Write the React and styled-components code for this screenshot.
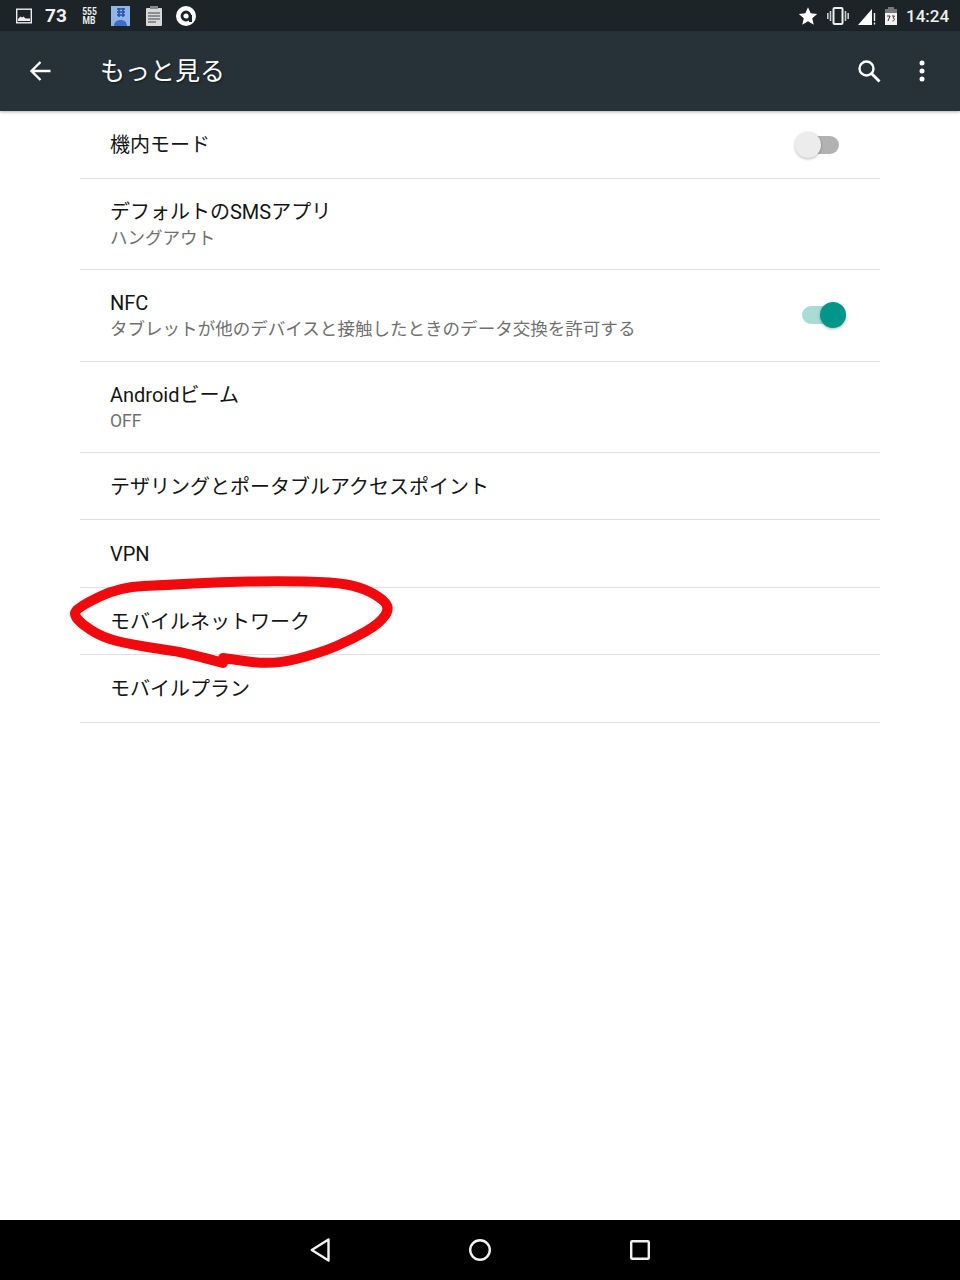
import React from "react";
import styled, { createGlobalStyle } from "styled-components";

const Global = createGlobalStyle`
  html, body { margin: 0; padding: 0; background: #fff; }
  * { box-sizing: border-box; }
`;
const Page = styled.div`
  position: relative; width: 960px; height: 1280px; display: flex; flex-direction: column;
  background: #fff; overflow: hidden;
  font-family: Roboto, "Noto Sans CJK JP", sans-serif;
`;
const StatusBar = styled.div`
  height: 31px; background: #1c2428; display: flex; align-items: center; justify-content: space-between;
  padding: 0 10px 0 16px; color: #fff; flex: none;
`;
const StatusGroup = styled.div`display: flex; align-items: center; gap: ${p => p.$gap || 0}px;`;
const Level = styled.span`font-size: 19px; font-weight: 700; color: #f2f2f2; margin: 0 15px 0 13px; width: 21px;`;
const Mem = styled.span`
  font-size: 10px; line-height: 9px; font-weight: 700; width: 16px; text-align: center; color: #eee; margin-right: 14px; transform: scaleX(.85);
`;
const Clock = styled.span`font-size: 17px; font-weight: 500; color: #f0f0f0; width: 44px; white-space: nowrap;`;
const Toolbar = styled.header`
  height: 80px; background: #263238; display: flex; align-items: center; flex: none;
  padding: 0 35px 0 28px; color: #fff; position: relative; z-index: 1;
  box-shadow: 0 1px 3px rgba(0,0,0,.3);
`;
const Title = styled.h1`
  margin: -4px 0 0 48px; font-size: 25px; font-weight: 400; flex: 1; color: #fff; white-space: nowrap;
  font-family: "Noto Sans CJK JP", sans-serif; text-shadow: 1px 1px 2px rgba(0,0,0,.5);
`;
const ToolIcons = styled.div`display: flex; align-items: center; gap: 37px;`;
const List = styled.main`flex: 1; padding: 0 80px; display: flex; flex-direction: column;`;
const Row = styled.div`
  height: ${p => p.$h}px; flex: none; padding: 0 41px 0 30px; display: flex; align-items: center; justify-content: space-between;
  border-bottom: 1px solid #e0e0e0;
`;
const RowText = styled.div`display: flex; flex-direction: column; min-width: 0; padding-top: ${p => p.$two ? 2 : 1}px;`;
const Label = styled.div`font-size: 20px; line-height: ${p => p.$two ? 25 : 26}px; color: #151515; white-space: nowrap;`;
const Sub = styled.div`font-size: 17.55px; line-height: 26px; color: #707070; white-space: nowrap;`;
const SwitchWrap = styled.div`position: relative; width: 44px; height: 26px; flex: none; margin-top: ${p => p.$on ? -2 : 0}px;`;
const Track = styled.div`position: absolute; left: 7px; right: 0; top: 4px; height: 18px; border-radius: 9px; background: ${p => p.$on ? "#a8dcd5" : "#b2b2b2"};`;
const Knob = styled.div`
  position: absolute; top: 0; width: 26px; height: 26px; border-radius: 50%;
  left: ${p => p.$on ? "25px" : "0"}; background: ${p => p.$on ? "#009688" : "#ececec"};
  box-shadow: 0 1px 3px rgba(0,0,0,.28);
`;
const NavBar = styled.nav`
  height: 60px; background: #000; flex: none; display: flex; align-items: center; justify-content: center; gap: 139px;
`;
const Scribble = styled.svg`position: absolute; left: 0; top: 0; pointer-events: none;`;
const Gap = styled.span`display: inline-block; width: ${p => p.$w}px;`;

const Switch = ({ on }) => (
  <SwitchWrap $on={on}><Track $on={on} /><Knob $on={on} /></SwitchWrap>
);

const rows = [
  { h: 68, label: "機内モード", sw: "off" },
  { h: 91, label: "デフォルトのSMSアプリ", sub: "ハングアウト" },
  { h: 92, label: "NFC", sub: "タブレットが他のデバイスと接触したときのデータ交換を許可する", sw: "on" },
  { h: 91, label: "Androidビーム", sub: "OFF" },
  { h: 67, label: "テザリングとポータブルアクセスポイント" },
  { h: 68, label: "VPN" },
  { h: 67, label: "モバイルネットワーク" },
  { h: 68, label: "モバイルプラン" },
];

const ring = [
  [223,663],[187,653],[160,649],[123,643],[97,635],[72,616],[80,606],[120,587],[167,585],[220,582],
  [277,581],[333,582],[360,587],[380,597],[390,608],[380,623],[353,639],[320,653],[273,665],[223,658],
];
const smooth = pts => {
  let d = `M${pts[0][0]} ${pts[0][1]}`;
  for (let i = 1; i < pts.length - 1; i++) {
    const mx = (pts[i][0] + pts[i + 1][0]) / 2;
    const my = (pts[i][1] + pts[i + 1][1]) / 2;
    d += ` Q${pts[i][0]} ${pts[i][1]} ${mx} ${my}`;
  }
  const last = pts[pts.length - 1];
  return `${d} L${last[0]} ${last[1]}`;
};

export default function App() {
  return (
    <Page>
      <Global />
      <StatusBar>
        <StatusGroup>
          <svg width="16" height="16" viewBox="0 0 16 16">
            <rect x="0.7" y="1.2" width="14.6" height="13.6" fill="none" stroke="#eee" strokeWidth="1.4" />
            <path d="M2 13v-2l2.500-2.500 1.500 1 1.500-1 2 2H14v2.500z" fill="#eee" />
          </svg>
          <Level>73</Level>
          <Mem>555<br />MB</Mem>
          <svg width="20" height="20" viewBox="0 0 20 20">
            <rect width="19" height="20" fill="#8fb6e6" />
            <path d="M3 20c0-4 3-6 6.500-6s6.500 2 6.500 6z" fill="#3c6fc4" />
            <path d="M6 3h8M6 6h8M6 9h8M8 2v9M12 2v9" stroke="#2c4fa8" strokeWidth="1.500" />
          </svg>
          <Gap $w={14} />
          <svg width="18" height="20" viewBox="0 0 18 20">
            <rect x="1" y="2" width="16" height="18" rx="1" fill="#d8d8d8" />
            <rect x="5" y="0" width="8" height="3" fill="#888" />
            <path d="M3 7h12M3 10h12M3 13h12M3 16h8" stroke="#444" strokeWidth="1.200" />
          </svg>
          <Gap $w={13} />
          <svg width="20" height="20" viewBox="0 0 20 20">
            <circle cx="10" cy="10" r="10" fill="#fff" />
            <circle cx="10" cy="10" r="4" fill="none" stroke="#1c2428" strokeWidth="2.800" />
            <rect x="13" y="9" width="3" height="7" fill="#1c2428" />
          </svg>
        </StatusGroup>
        <StatusGroup $gap={9}>
          <svg width="20" height="20" viewBox="0 0 24 24"><path d="M12 1.500l3.200 7.300 7.800.700-5.900 5.200 1.800 7.800-6.900-4.100-6.900 4.100 1.800-7.800L1 9.500l7.800-.700z" fill="#fff" /></svg>
          <svg width="22" height="18" viewBox="0 0 22 18">
            <rect x="6.500" y="1" width="9" height="16" rx="1" fill="none" stroke="#eee" strokeWidth="2" />
            <path d="M3.500 4v10M.8 6v6M18.500 4v10M21.200 6v6" stroke="#ccc" strokeWidth="1.600" />
          </svg>
          <svg width="18" height="18" viewBox="0 0 18 18">
            <path d="M0 18L14 2v16z" fill="#fff" />
            <path d="M16.500 6v8M16.500 15.500v2" stroke="#eee" strokeWidth="1.400" />
          </svg>
          <svg width="12" height="18" viewBox="0 0 12 18">
            <rect x="0" y="2" width="12" height="16" fill="#f2f2f2" />
            <rect x="0" y="2" width="12" height="4" fill="#777" />
            <rect x="3" y="0" width="6" height="2" fill="#777" />
            <path d="M2 9h3l-2 5M7 9h2.500l-1.500 2c2 0 2 3-.5 3" fill="none" stroke="#333" strokeWidth="1" />
          </svg>
          <Clock>14:24</Clock>
        </StatusGroup>
      </StatusBar>
      <Toolbar>
        <svg width="24" height="24" viewBox="0 0 24 24">
          <path d="M22.500 12H4M12.500 3L3.500 12l9 9" fill="none" stroke="#fff" strokeWidth="2.400" />
        </svg>
        <Title>もっと見る</Title>
        <ToolIcons>
          <svg width="26" height="26" viewBox="0 0 26 26">
            <circle cx="10.500" cy="10.500" r="7" fill="none" stroke="#fff" strokeWidth="2.400" />
            <path d="M15.500 15.500l8 8" stroke="#fff" strokeWidth="2.800" />
          </svg>
          <svg width="6" height="22" viewBox="0 0 6 22">
            <circle cx="3" cy="3" r="2.500" fill="#fff" />
            <circle cx="3" cy="11" r="2.500" fill="#fff" />
            <circle cx="3" cy="19" r="2.500" fill="#fff" />
          </svg>
        </ToolIcons>
      </Toolbar>
      <List>
        {rows.map(r => (
          <Row key={r.label} $h={r.h}>
            <RowText $two={!!r.sub}>
              <Label $two={!!r.sub}>{r.label}</Label>
              {r.sub && <Sub>{r.sub}</Sub>}
            </RowText>
            {r.sw && <Switch on={r.sw === "on"} />}
          </Row>
        ))}
      </List>
      <NavBar>
        <svg width="20" height="26" viewBox="0 0 20 26">
          <path d="M18.500 2.500L1.800 13 18.500 23.500z" fill="none" stroke="#f2f2f2" strokeWidth="2.400" strokeLinejoin="round" />
        </svg>
        <svg width="22" height="22" viewBox="0 0 22 22">
          <circle cx="11" cy="11" r="9.800" fill="none" stroke="#f2f2f2" strokeWidth="2.400" />
        </svg>
        <svg width="20" height="20" viewBox="0 0 20 20">
          <rect x="1.200" y="1.200" width="17.600" height="17.600" rx="1" fill="none" stroke="#f2f2f2" strokeWidth="2.400" />
        </svg>
      </NavBar>
      <Scribble width="960" height="1280" viewBox="0 0 960 1280">
        <path d={smooth(ring)} fill="none" stroke="#f00a0e" strokeWidth="10" strokeLinecap="round" strokeLinejoin="round" />
      </Scribble>
    </Page>
  );
}
